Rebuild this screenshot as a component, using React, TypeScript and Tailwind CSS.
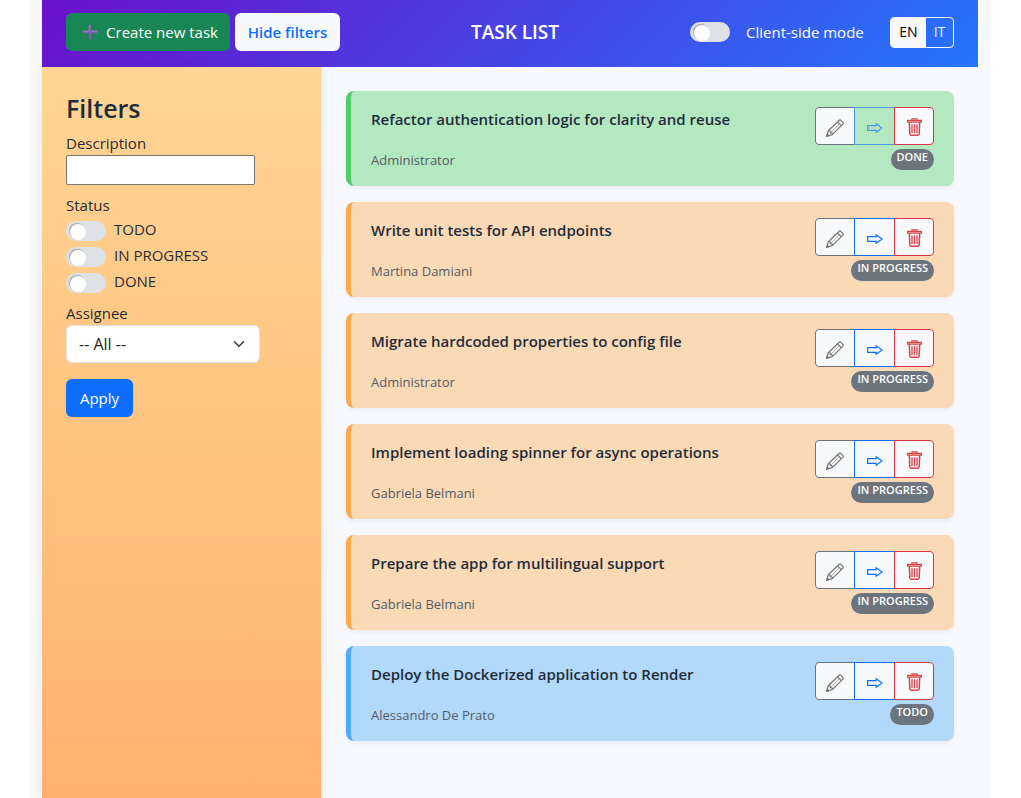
import { useState } from "react";

type Status = "TODO" | "IN PROGRESS" | "DONE";

interface Task {
  title: string;
  assignee: string;
  status: Status;
}

const TASKS: Task[] = [
  { title: "Refactor authentication logic for clarity and reuse", assignee: "Administrator", status: "DONE" },
  { title: "Write unit tests for API endpoints", assignee: "Martina Damiani", status: "IN PROGRESS" },
  { title: "Migrate hardcoded properties to config file", assignee: "Administrator", status: "IN PROGRESS" },
  { title: "Implement loading spinner for async operations", assignee: "Gabriela Belmani", status: "IN PROGRESS" },
  { title: "Prepare the app for multilingual support", assignee: "Gabriela Belmani", status: "IN PROGRESS" },
  { title: "Deploy the Dockerized application to Render", assignee: "Alessandro De Prato", status: "TODO" },
];

const STATUSES: Status[] = ["TODO", "IN PROGRESS", "DONE"];

const CARD_COLORS: Record<Status, string> = {
  TODO: "border-[#4dabf7] bg-[#b2d8fa]",
  "IN PROGRESS": "border-[#ffa94d] bg-[#fad9b7]",
  DONE: "border-[#51cf66] bg-[#b4e8c1]",
};

function PlusIcon() {
  return (
    <svg width="16" height="16" viewBox="0 0 16 16" aria-hidden="true">
      <path d="M6.8 0.5h2.4v6.3h6.3v2.4H9.2v6.3H6.8V9.2H0.5V6.8h6.3z" fill="#8458bd" />
      <path d="M7.2 1v6.2H1M9.2 7.2h6" fill="none" stroke="#a58ccb" strokeWidth="0.8" />
    </svg>
  );
}

function PencilIcon() {
  return (
    <svg width="18" height="18" viewBox="0 0 18 18" fill="none" stroke="currentColor" strokeWidth="1.2" strokeLinejoin="round" aria-hidden="true">
      <path d="M0.7 17.3 2.3 11.7 13.2 1.3Q14 0.6 14.8 1.3L17 3.6Q17.6 4.4 16.9 5.1L6.3 15.6Z" />
      <path d="M2.3 11.7 4.2 12 4.4 13.7 6.2 14 6.3 15.6M11.6 2.9 15.3 6.6" />
      <path d="M4.4 13.7 12.9 5.2" strokeWidth="0.6" />
      <path d="M0.7 17.3 1.3 15.2 2.8 16.6Z" fill="currentColor" />
    </svg>
  );
}

function ArrowIcon() {
  return (
    <svg width="16" height="10" viewBox="0 0 16 10" fill="none" stroke="currentColor" strokeWidth="1.2" aria-hidden="true">
      <path d="M0.7 2.6H9.2V0.8L15 5 9.2 9.2V7.4H0.7Z" />
    </svg>
  );
}

function TrashIcon() {
  return (
    <svg width="15" height="18" viewBox="0 0 15 18" fill="none" stroke="currentColor" aria-hidden="true">
      <path d="M5 1.8V0.9H10V1.8" strokeWidth="1.4" />
      <path d="M0.6 2.4H14.4V4.2H0.6Z" strokeWidth="1.1" fill="#f0a39c" />
      <path d="M2.3 4.4 2.8 15.8Q2.9 17.2 4 17.2H11Q12.1 17.2 12.2 15.8L12.7 4.4" strokeWidth="1.5" />
      <path d="M5 6.2V15.2M7.5 6.2V15.2M10 6.2V15.2" strokeWidth="1.3" />
    </svg>
  );
}

function Switch({ id }: { id: string }) {
  return (
    <input
      id={id}
      type="checkbox"
      role="switch"
      className="flex h-5 w-10 shrink-0 appearance-none items-center rounded-full bg-[#dee2e6] px-1 pt-px before:block before:size-4 before:rounded-full before:bg-white before:shadow-[-1px_-1px_1px_#a3a6aa] checked:justify-end checked:bg-[#0d6efd]"
    />
  );
}

function TaskCard({ task }: { task: Task }) {
  const done = task.status === "DONE";
  return (
    <li
      className={`flex justify-between rounded-lg border-l-[5px] py-4 pr-5 pl-5 shadow-[0_2px_5px_rgba(0,0,0,0.06)] ${CARD_COLORS[task.status]}`}
    >
      <div className="flex flex-col justify-between">
        <h2 className="text-[15px] leading-6 font-semibold text-[#1f2d3a]">{task.title}</h2>
        <p className="text-[13px] leading-5 text-[#535c63]">{task.assignee}</p>
      </div>
      <div className="flex flex-col items-end gap-1">
        <div className="flex h-[38px]">
          <button
            type="button"
            aria-label="Edit"
            className="flex w-10 items-center justify-center rounded-l border border-[#6c757d] bg-[#f8f9fa] pt-1 text-[#747474]"
          >
            <PencilIcon />
          </button>
          <button
            type="button"
            aria-label="Advance"
            disabled={done}
            className="-ml-px flex w-[41px] items-center justify-center border border-[#0d6efd] bg-[#f8f9fa] pt-1 text-[#0d6efd] disabled:border-[#4a97e4] disabled:bg-transparent disabled:text-[#4a97e4]"
          >
            <ArrowIcon />
          </button>
          <button
            type="button"
            aria-label="Delete"
            className="-ml-px flex w-10 items-center justify-center rounded-r border border-[#dc3545] bg-[#f8f9fa] pt-0.5 text-[#d8434a]"
          >
            <TrashIcon />
          </button>
        </div>
        <span className="rounded-full bg-[#6c757d] px-1.5 pb-1.5 text-[11px] leading-[15px] font-semibold text-white">
          {task.status}
        </span>
      </div>
    </li>
  );
}

export default function App() {
  const [lang, setLang] = useState("EN");
  const [showFilters, setShowFilters] = useState(true);
  return (
    <div className="min-h-screen bg-white pr-px font-['Open_Sans','Noto_Sans',sans-serif] text-[15px] leading-6 text-[#1f2d3a]">
      <div className="mx-auto flex min-h-screen max-w-[960px] flex-col bg-[#f8f9fe] px-3">
        <header className="flex h-[67px] items-center justify-between bg-linear-135/srgb from-[#6a11cb] to-[#2575fc] px-6 pb-[3px]">
          <div className="flex gap-[5px]">
            <button type="button" className="flex h-[38px] w-[164px] items-center justify-center gap-2 rounded-md bg-[#198754] pl-1 whitespace-nowrap text-white">
              <PlusIcon />
              Create new task
            </button>
            <button
              type="button"
              onClick={() => setShowFilters(!showFilters)}
              className="h-[38px] w-[105px] rounded-md bg-[#f8f9fa] font-semibold whitespace-nowrap text-[#0d6efd]"
            >
              {showFilters ? "Hide filters" : "Show filters"}
            </button>
          </div>
          <h1 className="text-[19px] font-semibold text-white">TASK LIST</h1>
          <div className="flex items-center">
            <Switch id="client-mode" />
            <label htmlFor="client-mode" className="ml-4 w-[121px] whitespace-nowrap text-white">Client-side mode</label>
            <div className="ml-[23px] flex h-[31px] w-16 overflow-hidden rounded border border-[#f8f9fa] text-sm">
              {["EN", "IT"].map((code) => (
                <button
                  key={code}
                  type="button"
                  aria-pressed={lang === code}
                  onClick={() => setLang(code)}
                  className="grow text-[#f8f9fa] first:w-[35px] first:grow-0 aria-pressed:bg-[#f8f9fa] aria-pressed:text-black"
                >
                  {code}
                </button>
              ))}
            </div>
          </div>
        </header>

        <div className="flex grow">
          {showFilters && (
            <aside className="w-[280px] shrink-0 border-r border-[#eceff5] bg-linear-to-b/srgb from-[#ffd594] to-[#ffb26e] px-6 pt-6 shadow-[0_0_10px_rgba(0,0,0,0.07)]">
              <h2 className="mb-1.5 text-[25px] leading-[34px] font-semibold">Filters</h2>
              <label htmlFor="description" className="block">Description</label>
              <input id="description" type="text" className="block h-[30px] w-[189px] rounded-xs border border-[#767676] bg-white px-1" />
              <fieldset className="mt-2">
                <legend className="block">Status</legend>
                {STATUSES.map((status) => (
                  <div key={status} className="flex h-[26px] items-start gap-2">
                    <div className="pt-1">
                      <Switch id={`status-${status}`} />
                    </div>
                    <label htmlFor={`status-${status}`}>{status}</label>
                  </div>
                ))}
              </fieldset>
              <label htmlFor="assignee" className="mt-1.5 block">Assignee</label>
              <div className="grid w-[194px] items-center">
                <select id="assignee" className="col-start-1 row-start-1 h-[38px] appearance-none rounded-md border border-[#dee2e6] bg-white px-3 text-base text-[#212529]">
                  <option>-- All --</option>
                </select>
                <svg width="12" height="12" viewBox="0 0 16 16" className="pointer-events-none col-start-1 row-start-1 mr-[15px] justify-self-end" fill="none" stroke="#343a40" strokeWidth="2" strokeLinecap="round" strokeLinejoin="round" aria-hidden="true">
                  <path d="m2 5 6 6 6-6" />
                </svg>
              </div>
              <button type="button" className="mt-4 h-[38px] w-[67px] rounded-md bg-[#0d6efd] text-white">Apply</button>
            </aside>
          )}
          <main className="grow p-6">
            <ul className="flex flex-col gap-4">
              {TASKS.map((task) => (
                <TaskCard key={task.title} task={task} />
              ))}
            </ul>
          </main>
        </div>
      </div>
    </div>
  );
}
